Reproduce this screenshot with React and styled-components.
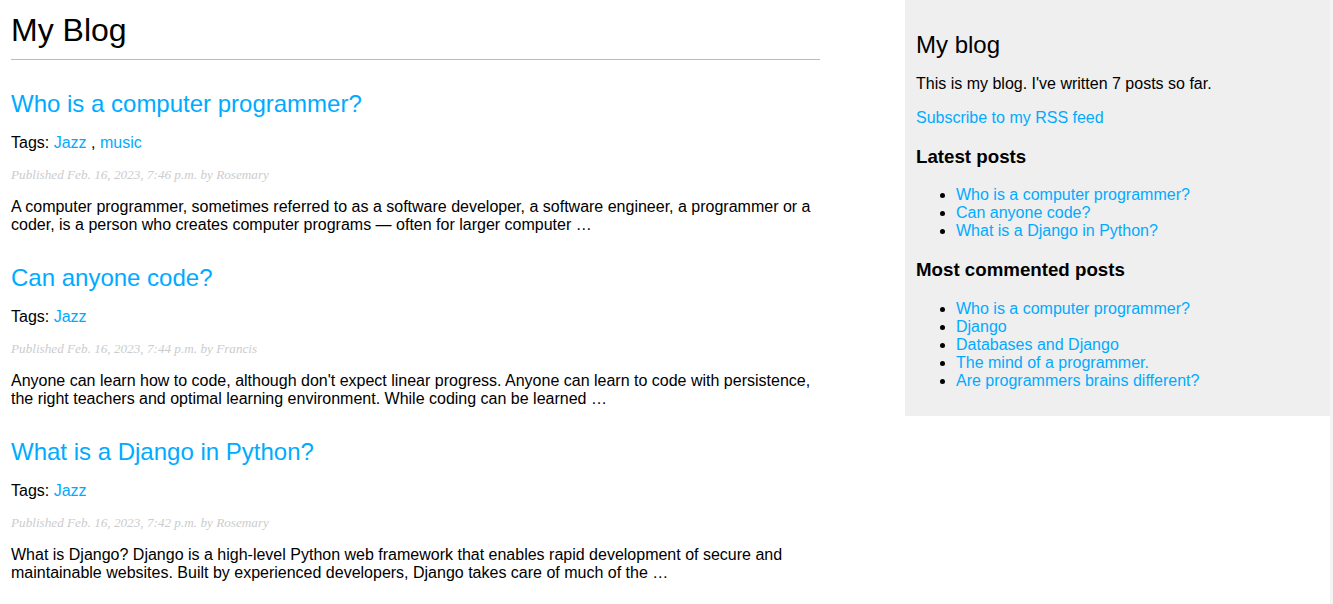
import React from 'react';
import styled, { createGlobalStyle } from 'styled-components';

const posts = [
	{
		title: 'Who is a computer programmer?',
		tags: ['Jazz', 'music'],
		date: 'Feb. 16, 2023, 7:46 p.m.',
		author: 'Rosemary',
		body: 'A computer programmer, sometimes referred to as a software developer, a software engineer, a programmer or a coder, is a person who creates computer programs — often for larger computer …',
	},
	{
		title: 'Can anyone code?',
		tags: ['Jazz'],
		date: 'Feb. 16, 2023, 7:44 p.m.',
		author: 'Francis',
		body: "Anyone can learn how to code, although don't expect linear progress. Anyone can learn to code with persistence, the right teachers and optimal learning environment. While coding can be learned …",
	},
	{
		title: 'What is a Django in Python?',
		tags: ['Jazz'],
		date: 'Feb. 16, 2023, 7:42 p.m.',
		author: 'Rosemary',
		body: 'What is Django? Django is a high-level Python web framework that enables rapid development of secure and maintainable websites. Built by experienced developers, Django takes care of much of the …',
	},
];

const latest = [
	'Who is a computer programmer?',
	'Can anyone code?',
	'What is a Django in Python?',
];

const mostCommented = [
	'Who is a computer programmer?',
	'Django',
	'Databases and Django',
	'The mind of a programmer.',
	'Are programmers brains different?',
];

function PostList({ items }) {
	return (
		<List>
			{items.map(t => (
				<li key={t}>
					<Link href="#">{t}</Link>
				</li>
			))}
		</List>
	);
}

function App() {
	return (
		<>
			<GlobalStyle />
			<Page>
				<Content>
					<Title>My Blog</Title>
					{posts.map(post => (
						<article key={post.title}>
							<PostTitle>
								<Link href="#">{post.title}</Link>
							</PostTitle>
							<Tags>
								Tags:{' '}
								{post.tags.map((tag, i) => (
									<React.Fragment key={tag}>
										{i > 0 && ' , '}
										<Link href="#">{tag}</Link>
									</React.Fragment>
								))}
							</Tags>
							<PostDate>
								Published {post.date} by {post.author}
							</PostDate>
							<Body>{post.body}</Body>
						</article>
					))}
				</Content>
				<Sidebar>
					<SideTitle>My blog</SideTitle>
					<SideText>This is my blog. I've written 7 posts so far.</SideText>
					<SideText>
						<Link href="#">Subscribe to my RSS feed</Link>
					</SideText>
					<SideHeading>Latest posts</SideHeading>
					<PostList items={latest} />
					<SideHeading>Most commented posts</SideHeading>
					<PostList items={mostCommented} />
				</Sidebar>
				<EdgeStrip />
			</Page>
		</>
	);
}

export default App;

const GlobalStyle = createGlobalStyle`
	body {
		margin: 0;
		padding: 0;
		font-family: 'Liberation Sans', Arial, sans-serif;
		color: #000;
		background: #fff;
	}
`;
const Page = styled.div`
	display: flex;
	align-items: flex-start;
	width: 1333px;
	min-height: 604px;
`;
const Content = styled.main`
	width: 809px;
	padding-left: 11px;
`;
const Title = styled.h1`
	font-size: 32px;
	font-weight: normal;
	margin: 12px 0 21px;
	padding: 0 0 10px 0;
	border-bottom: 1px solid #bbb;
`;
const PostTitle = styled.h2`
	font-size: 24px;
	font-weight: normal;
	margin: 30px 0 0;
`;
const Link = styled.a`
	color: #00abff;
	text-decoration: none;
`;
const Tags = styled.p`
	font-size: 16px;
	margin: 16px 0;
`;
const PostDate = styled.p`
	color: #ccc;
	font-family: 'Liberation Serif', Georgia, serif;
	font-size: 13.2px;
	font-style: italic;
	margin: 16px 0;
	line-height: 14px;
`;
const Body = styled.p`
	font-size: 16px;
	margin: 16px 0;
`;
const Sidebar = styled.aside`
	margin-left: auto;
	width: 404px;
	padding: 11px 10px 10px 11px;
	background: #efefef;
`;
const EdgeStrip = styled.div`
	align-self: stretch;
	width: 3px;
	background: #f4f4f4;
`;
const SideTitle = styled.h2`
	font-size: 24px;
	font-weight: normal;
	margin: 20px 0 0;
`;
const SideText = styled.p`
	font-size: 16px;
	margin: 16px 0;
`;
const SideHeading = styled.h3`
	font-size: 18.72px;
	font-weight: bold;
	margin: 18.72px 0;
`;
const List = styled.ul`
	margin: 16px 0;
	padding-left: 40px;
	font-size: 16px;
`;
